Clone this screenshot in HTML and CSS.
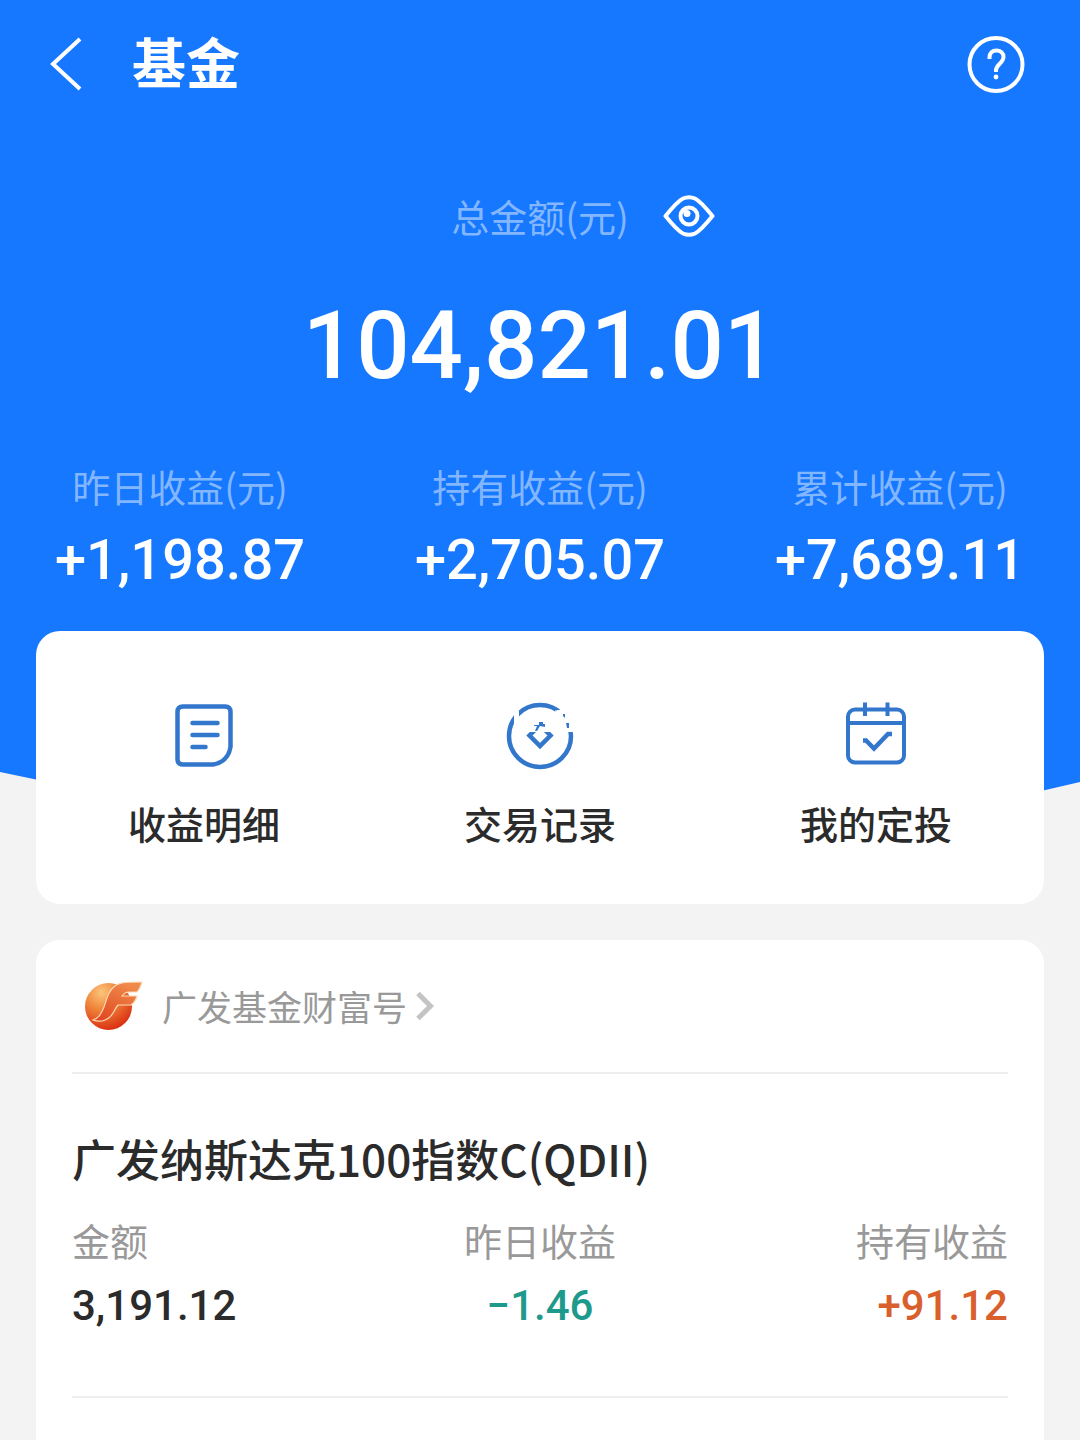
FILE: index.html
```html
<!DOCTYPE html>
<html lang="zh-CN">
<head>
  <meta charset="UTF-8" />
  <meta name="viewport" content="width=device-width, initial-scale=1.0"/>
  <title>基金</title>
  <link rel="stylesheet" href="styles.css">
</head>
<body>

  <div class="hero">
    <header class="topbar">
      <button class="icon-btn" aria-label="返回">
        <svg width="36" height="56" viewBox="0 0 36 56" fill="none" stroke="currentColor" stroke-width="4">
          <path d="M32 3L5 28L32 53"/>
        </svg>
      </button>
      <h1>基金</h1>
      <button class="icon-btn" aria-label="帮助">
        <svg width="60" height="60" viewBox="0 0 60 60" fill="none" stroke="currentColor" stroke-width="4">
          <circle cx="30" cy="30.500" r="26.500"/>
          <path d="M23.500 25V23.500C23.500 19 26.500 16.500 30.500 16.500C34.500 16.500 37.500 19 37.500 23C37.500 26 36 27.500 33.500 30C31 32.500 30 33.500 30 36V38" stroke-width="4"/>
          <circle cx="30" cy="43" r="2.400" fill="currentColor" stroke="none"/>
        </svg>
      </button>
    </header>

    <div class="total">
      <span class="label">总金额(元)</span>
      <button class="icon-btn" aria-label="显示金额">
        <svg width="52" height="42" viewBox="0 0 52 42" fill="none" stroke="currentColor" stroke-width="4">
          <path d="M2.500 21C9 13 16 5.500 20 3.500C24 1.700 28 1.700 32 3.500C36 5.500 43 13 49.500 21C43 29 36 36.500 32 38.500C28 40.300 24 40.300 20 38.500C16 36.500 9 29 2.500 21Z" stroke-linejoin="round"/>
          <circle cx="26" cy="21" r="8.500"/>
          <circle cx="24" cy="18.500" r="3.500" fill="currentColor" stroke="none"/>
        </svg>
      </button>
    </div>
    <div class="total-value">104,821.01</div>

    <div class="stats">
      <div class="stat">
        <div class="label">昨日收益(元)</div>
        <div class="stat-value">+1,198.87</div>
      </div>
      <div class="stat">
        <div class="label">持有收益(元)</div>
        <div class="stat-value">+2,705.07</div>
      </div>
      <div class="stat">
        <div class="label">累计收益(元)</div>
        <div class="stat-value">+7,689.11</div>
      </div>
    </div>
  </div>

  <nav class="card actions">
    <a class="action" href="#">
      <svg width="68" height="68" viewBox="0 0 68 68" fill="none" stroke="currentColor" stroke-width="4.500">
        <path d="M13 4.500H55Q60.500 4.500 60.500 10V45Q58 60 43 62.500H13Q7.500 62.500 7.500 57V10Q7.500 4.500 13 4.500Z"/>
        <path d="M22.500 21H47.500M22.500 33H47.500M22.500 45H35.500" stroke-linecap="round"/>
      </svg>
      收益明细
    </a>
    <a class="action" href="#">
      <svg width="68" height="68" viewBox="0 0 68 68" fill="none" stroke="currentColor" stroke-width="4.500">
        <circle cx="34" cy="34" r="31"/>
        <path d="M34 23L44.500 33.500L34 44L23.500 33.500Z"/>
        <path d="M8 9H13V27H8ZM22 16H46V30H22ZM49 8H68V30H52Z" fill="#fff" stroke="none"/>
        <path d="M33 20H37V22H39V25L34 24L31 29H29L31 24H28V23H33ZM48 7H52L50 9ZM57 12H59V16L57 14ZM60 21H63V26H61Z" fill="currentColor" stroke="none"/>
      </svg>
      交易记录
    </a>
    <a class="action" href="#">
      <svg width="68" height="68" viewBox="0 0 68 68" fill="none" stroke="currentColor" stroke-width="4">
        <rect x="6" y="7.500" width="56" height="53" rx="7"/>
        <path d="M6 21H62M23 0.500V14M45.500 0.500V14"/>
        <path d="M21 38.500H24L32 46.500L46 32H50" stroke-width="4.500"/>
      </svg>
      我的定投
    </a>
  </nav>

  <section class="card funds">
    <a class="brand" href="#">
      <svg class="brand-logo" width="60" height="50" viewBox="0 0 60 50">
        <defs>
          <radialGradient id="ball" cx="0.35" cy="0.2" r="0.85">
            <stop offset="0" stop-color="#fbc67c"/>
            <stop offset="0.45" stop-color="#ef8238"/>
            <stop offset="1" stop-color="#d92a10"/>
          </radialGradient>
          <linearGradient id="wing" x1="0" y1="1" x2="0.6" y2="0">
            <stop offset="0" stop-color="#e0401c"/>
            <stop offset="1" stop-color="#ef8a4a"/>
          </linearGradient>
        </defs>
        <circle cx="24.500" cy="25.500" r="23.500" fill="url(#ball)"/>
        <path d="M58 1C44 1 36 1 31 5C24 10 23 18 20 26C17 33 15 37 9 39C17 42 25 39 29 32C31 29 32 26 34 24H47C50 22 52 19 53 15H38C40 12 42 11 45 11H53C56 8 57 4 58 1Z" fill="url(#wing)" stroke="#fbd9b4" stroke-width="1.200"/>
      </svg>
      <span>广发基金财富号</span>
      <svg class="brand-arrow" width="20" height="30" viewBox="0 0 20 30" fill="none" stroke="#c4c4c4" stroke-width="5">
        <path d="M3 2.500L15.500 15L3 27.500"/>
      </svg>
    </a>

    <article class="fund">
      <h2>广发纳斯达克100指数C(QDII)</h2>
      <dl class="fund-row">
        <div>
          <dt>金额</dt>
          <dd>3,191.12</dd>
        </div>
        <div>
          <dt>昨日收益</dt>
          <dd class="down">−1.46</dd>
        </div>
        <div>
          <dt>持有收益</dt>
          <dd class="up">+91.12</dd>
        </div>
      </dl>
    </article>
  </section>

</body>
</html>
```
FILE: styles.css
```css
* {
  box-sizing: border-box;
}

body {
  display: flex;
  flex-direction: column;
  min-height: 100vh;
  margin: 0;
  background: #f3f3f3;
  color: #2b2b2b;
  font-family: "Noto Sans CJK SC", sans-serif;
  font-size: 38px;
  line-height: 48px;
}

h1, h2, dl, dd {
  margin: 0;
}

a {
  color: inherit;
  text-decoration: none;
}

.icon-btn {
  display: flex;
  padding: 0;
  border: none;
  background: none;
  color: #fff;
  cursor: pointer;
}

.hero {
  padding-bottom: 215px;
  background: #1677ff;
  color: #fff;
  clip-path: polygon(0 0, 100% 0, 100% 782px, 96% 792px, 50% 100%, 4% 781px, 0 772px);
}

.topbar {
  display: flex;
  align-items: center;
  height: 128px;
  padding: 0 54px 0 48px;
}

.topbar h1 {
  flex: 1;
  margin-left: 48px;
  padding-bottom: 6px;
  font-size: 54px;
  font-weight: bold;
}

.label {
  color: #82b6ff;
}

.total {
  display: grid;
  grid-template-columns: 1fr auto 1fr;
  align-items: center;
  column-gap: 34px;
  margin-top: 64px;
}

.total .label {
  grid-column: 2;
}

.total-value,
.stat-value,
.fund-row dd {
  font-family: Roboto, sans-serif;
  font-weight: 500;
}

.total-value {
  margin-top: 46px;
  font-size: 94px;
  line-height: 120px;
  text-align: center;
}

.stats {
  display: grid;
  grid-template-columns: repeat(3, 1fr);
  margin-top: 56px;
  text-align: center;
}

.stat-value {
  margin-top: 14px;
  font-size: 56px;
  line-height: 72px;
}

.card {
  margin: 0 36px;
  border-radius: 24px;
  background: #fff;
}

.actions {
  position: relative;
  display: grid;
  grid-template-columns: repeat(3, 1fr);
  margin-top: -180px;
  padding: 71px 0 57px;
}

.action {
  display: flex;
  flex-direction: column;
  align-items: center;
  gap: 29px;
  font-weight: 500;
}

.action svg {
  color: #3377cc;
}

.funds {
  flex: 1;
  margin-top: 36px;
  padding: 0 36px;
  border-radius: 24px 24px 0 0;
}

.brand {
  display: flex;
  align-items: center;
  padding: 41px 12px;
  border-bottom: 2px solid #eee;
  color: #999;
  font-size: 35px;
}

.brand-logo {
  margin-right: 18px;
}

.brand-arrow {
  margin-left: 8px;
}

.fund {
  padding: 54px 0 60px;
  border-bottom: 2px solid #eee;
}

.fund h2 {
  font-size: 44px;
  font-weight: 500;
  line-height: 60px;
}

.fund-row {
  display: grid;
  grid-template-columns: repeat(3, 1fr);
  margin-top: 28px;
  text-align: center;
}

.fund-row > :first-child {
  text-align: left;
}

.fund-row > :last-child {
  text-align: right;
}

.fund-row dt {
  color: #999;
}

.fund-row dd {
  margin-top: 12px;
  font-size: 42px;
  line-height: 60px;
}

.fund-row .down {
  color: #1e9a8c;
}

.fund-row .up {
  color: #d9602c;
}
```
